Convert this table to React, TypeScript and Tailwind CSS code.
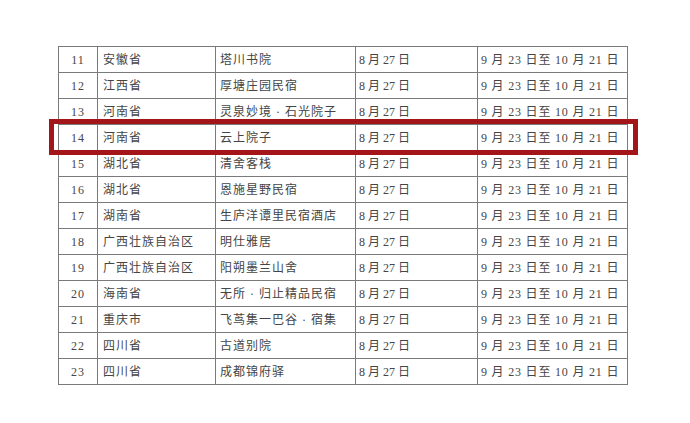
import React from "react";

const rows: [string, string, string][] = [
  ["11", "安徽省", "塔川书院"],
  ["12", "江西省", "厚塘庄园民宿"],
  ["13", "河南省", "灵泉妙境 · 石光院子"],
  ["14", "河南省", "云上院子"],
  ["15", "湖北省", "清舍客栈"],
  ["16", "湖北省", "恩施星野民宿"],
  ["17", "湖南省", "生庐洋谭里民宿酒店"],
  ["18", "广西壮族自治区", "明仕雅居"],
  ["19", "广西壮族自治区", "阳朔墨兰山舍"],
  ["20", "海南省", "无所 · 归止精品民宿"],
  ["21", "重庆市", "飞茑集一巴谷 · 宿集"],
  ["22", "四川省", "古道别院"],
  ["23", "四川省", "成都锦府驿"],
];

export default function App() {
  return (
    <div className="relative w-[690px] h-[423px] bg-white font-['Liberation_Serif','Noto_Sans_CJK_SC',serif] text-[12px] text-[#454545]">
      <div className="pt-[46px] pl-[58px]">
        <div className="grid w-[570px] grid-cols-[39px_118px_140px_122px_150px] border-l border-t border-[#7a7a7a]">
          {rows.map(([n, p, name]) => (
            <React.Fragment key={n}>
              <div className="flex h-[26px] items-center justify-center border-b border-r border-[#7a7a7a] tracking-[1px]">
                {n}
              </div>
              <div className="flex h-[26px] items-center border-b border-r border-[#7a7a7a] pl-[5px] tracking-[1px]">
                {p}
              </div>
              <div className="flex h-[26px] items-center border-b border-r border-[#7a7a7a] pl-[4px] tracking-[1px]">
                {name}
              </div>
              <div className="flex h-[26px] items-center border-b border-r border-[#7a7a7a] pl-[3px]">
                8 月 27 日
              </div>
              <div className="flex h-[26px] items-center border-b border-r border-[#7a7a7a] pl-[3px] tracking-[0.8px]">
                9 月 23 日至 10 月 21 日
              </div>
            </React.Fragment>
          ))}
        </div>
      </div>
      <div className="absolute left-[49px] top-[119px] h-[36px] w-[589px] border-[5px] border-[#a31518]" />
    </div>
  );
}
